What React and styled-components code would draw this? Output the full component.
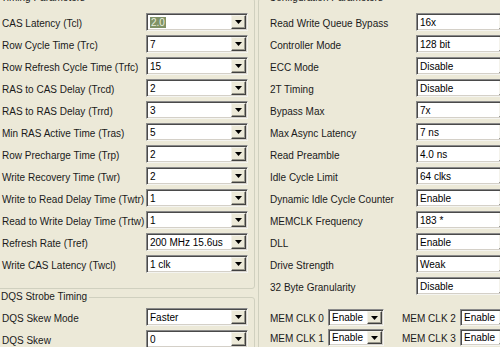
import React from "react";
import styled, { createGlobalStyle } from "styled-components";

const GlobalStyle = createGlobalStyle`
  html, body {
    margin: 0;
    padding: 0;
    background: #ece9d8;
  }
  body {
    font-family: "Liberation Sans", Arial, sans-serif;
    font-size: 10px;
    color: #000;
  }
`;

const timing = [
  { label: "CAS Latency (Tcl)", value: "2.0", selected: true },
  { label: "Row Cycle Time (Trc)", value: "7" },
  { label: "Row Refresh Cycle Time (Trfc)", value: "15" },
  { label: "RAS to CAS Delay (Trcd)", value: "2" },
  { label: "RAS to RAS Delay (Trrd)", value: "3" },
  { label: "Min RAS Active Time (Tras)", value: "5" },
  { label: "Row Precharge Time (Trp)", value: "2" },
  { label: "Write Recovery Time (Twr)", value: "2" },
  { label: "Write to Read Delay Time (Twtr)", value: "1" },
  { label: "Read to Write Delay Time (Trtw)", value: "1" },
  { label: "Refresh Rate (Tref)", value: "200 MHz 15.6us" },
  { label: "Write CAS Latency (Twcl)", value: "1 clk" },
];

const dqs = [
  { label: "DQS Skew Mode", value: "Faster" },
  { label: "DQS Skew", value: "0" },
];

const config = [
  { label: "Read Write Queue Bypass", value: "16x" },
  { label: "Controller Mode", value: "128 bit" },
  { label: "ECC Mode", value: "Disable" },
  { label: "2T Timing", value: "Disable" },
  { label: "Bypass Max", value: "7x" },
  { label: "Max Async Latency", value: "7 ns" },
  { label: "Read Preamble", value: "4.0 ns" },
  { label: "Idle Cycle Limit", value: "64 clks" },
  { label: "Dynamic Idle Cycle Counter", value: "Enable" },
  { label: "MEMCLK Frequency", value: "183 *" },
  { label: "DLL", value: "Enable" },
  { label: "Drive Strength", value: "Weak" },
  { label: "32 Byte Granularity", value: "Disable" },
];

const memClks = ["MEM CLK 0", "MEM CLK 2", "MEM CLK 1", "MEM CLK 3"];

const Arrow = () => (
  <svg width="7" height="4" viewBox="0 0 7 4">
    <polygon points="0,0 7,0 3.5,4" fill="#000" />
  </svg>
);

const Combo = ({ value, selected, width, height }) => (
  <ComboBox $width={width} $height={height}>
    <ComboValue>{selected ? <Selected>{value}</Selected> : value}</ComboValue>
    <DropButton>
      <Arrow />
    </DropButton>
  </ComboBox>
);

const SettingRow = ({ label, value, selected, labelWidth, comboWidth }) => (
  <Row $label={labelWidth}>
    <Label>{label}</Label>
    <Combo value={value} selected={selected} width={comboWidth} />
  </Row>
);

export default function App() {
  return (
    <Screen>
      <GlobalStyle />
      <Columns>
        <LeftColumn>
          <GroupBox $bottom={15}>
            <Legend>Timing Parameters</Legend>
            <Rows>
              {timing.map((t) => (
                <SettingRow key={t.label} {...t} labelWidth={144} comboWidth={102} />
              ))}
            </Rows>
          </GroupBox>
          <GroupBox $top={5} $bottom={10}>
            <Legend>DQS Strobe Timing</Legend>
            <Rows>
              {dqs.map((t) => (
                <SettingRow key={t.label} {...t} labelWidth={144} comboWidth={102} />
              ))}
            </Rows>
          </GroupBox>
        </LeftColumn>
        <GroupBox $bottom={10}>
          <Legend>Configuration Parameters</Legend>
          <Rows>
            {config.map((t) => (
              <SettingRow key={t.label} {...t} labelWidth={146} comboWidth={100} />
            ))}
          </Rows>
          <ClockGrid>
            {memClks.map((name) => (
              <ClockItem key={name}>
                <ClockLabel>{name}</ClockLabel>
                <Combo value="Enable" width={56} height={17} />
              </ClockItem>
            ))}
          </ClockGrid>
        </GroupBox>
      </Columns>
    </Screen>
  );
}

const Screen = styled.div`
  width: 500px;
  height: 347px;
  overflow: hidden;
  background: #ece9d8;
`;

const Columns = styled.div`
  display: grid;
  grid-template-columns: 265px 272px;
  column-gap: 3px;
  align-items: start;
  margin: -8px 0 0 -10px;
`;

const LeftColumn = styled.div`
  display: flex;
  flex-direction: column;
  gap: 2px;
`;

const GroupBox = styled.fieldset`
  margin: 0;
  min-width: 0;
  padding: ${(p) => p.$top ?? 9}px 6px ${(p) => p.$bottom ?? 10}px 11px;
  border: 1px solid #d0d0bf;
  border-radius: 3px;
`;

const Legend = styled.legend`
  padding: 0 2px;
  margin-left: -3px;
  font-size: 10px;
  line-height: 12px;
  color: #1a1a1a;
`;

const Rows = styled.div`
  display: flex;
  flex-direction: column;
  gap: 4px;
`;

const Row = styled.div`
  display: grid;
  grid-template-columns: ${(p) => p.$label}px auto;
  align-items: center;
  height: 18px;
`;

const Label = styled.div`
  padding-top: 2px;
  white-space: nowrap;
  color: #1a1a1a;
`;

const ComboBox = styled.div`
  box-sizing: border-box;
  display: flex;
  width: ${(p) => p.$width}px;
  height: ${(p) => p.$height ?? 18}px;
  background: #fff;
  border: 1px solid;
  border-color: #8a8a8a #f4f4f0 #f4f4f0 #8a8a8a;
  box-shadow: inset 1px 1px 0 #4a4a4a, inset -1px -1px 0 #d4d0c8;
  padding: 1px;
`;

const ComboValue = styled.div`
  flex: 1;
  min-width: 0;
  display: flex;
  align-items: center;
  padding-left: 2px;
  white-space: nowrap;
  overflow: hidden;
  color: #000;
`;

const Selected = styled.span`
  background: #7f9266;
  color: #e8eedc;
  padding: 0 1px;
`;

const DropButton = styled.div`
  box-sizing: border-box;
  width: 15px;
  display: flex;
  align-items: center;
  justify-content: center;
  background: #ece9d8;
  border: 1px solid;
  border-color: #f4f3ec #404040 #404040 #f4f3ec;
  box-shadow: inset -1px -1px 0 #9a988c;
`;

const ClockGrid = styled.div`
  display: grid;
  grid-template-columns: 114px 114px;
  column-gap: 18px;
  row-gap: 3px;
  margin-top: 14px;
`;

const ClockItem = styled.div`
  display: flex;
  align-items: center;
  height: 17px;
`;

const ClockLabel = styled.div`
  width: 58px;
  padding-top: 2px;
  white-space: nowrap;
  color: #1a1a1a;
`;
